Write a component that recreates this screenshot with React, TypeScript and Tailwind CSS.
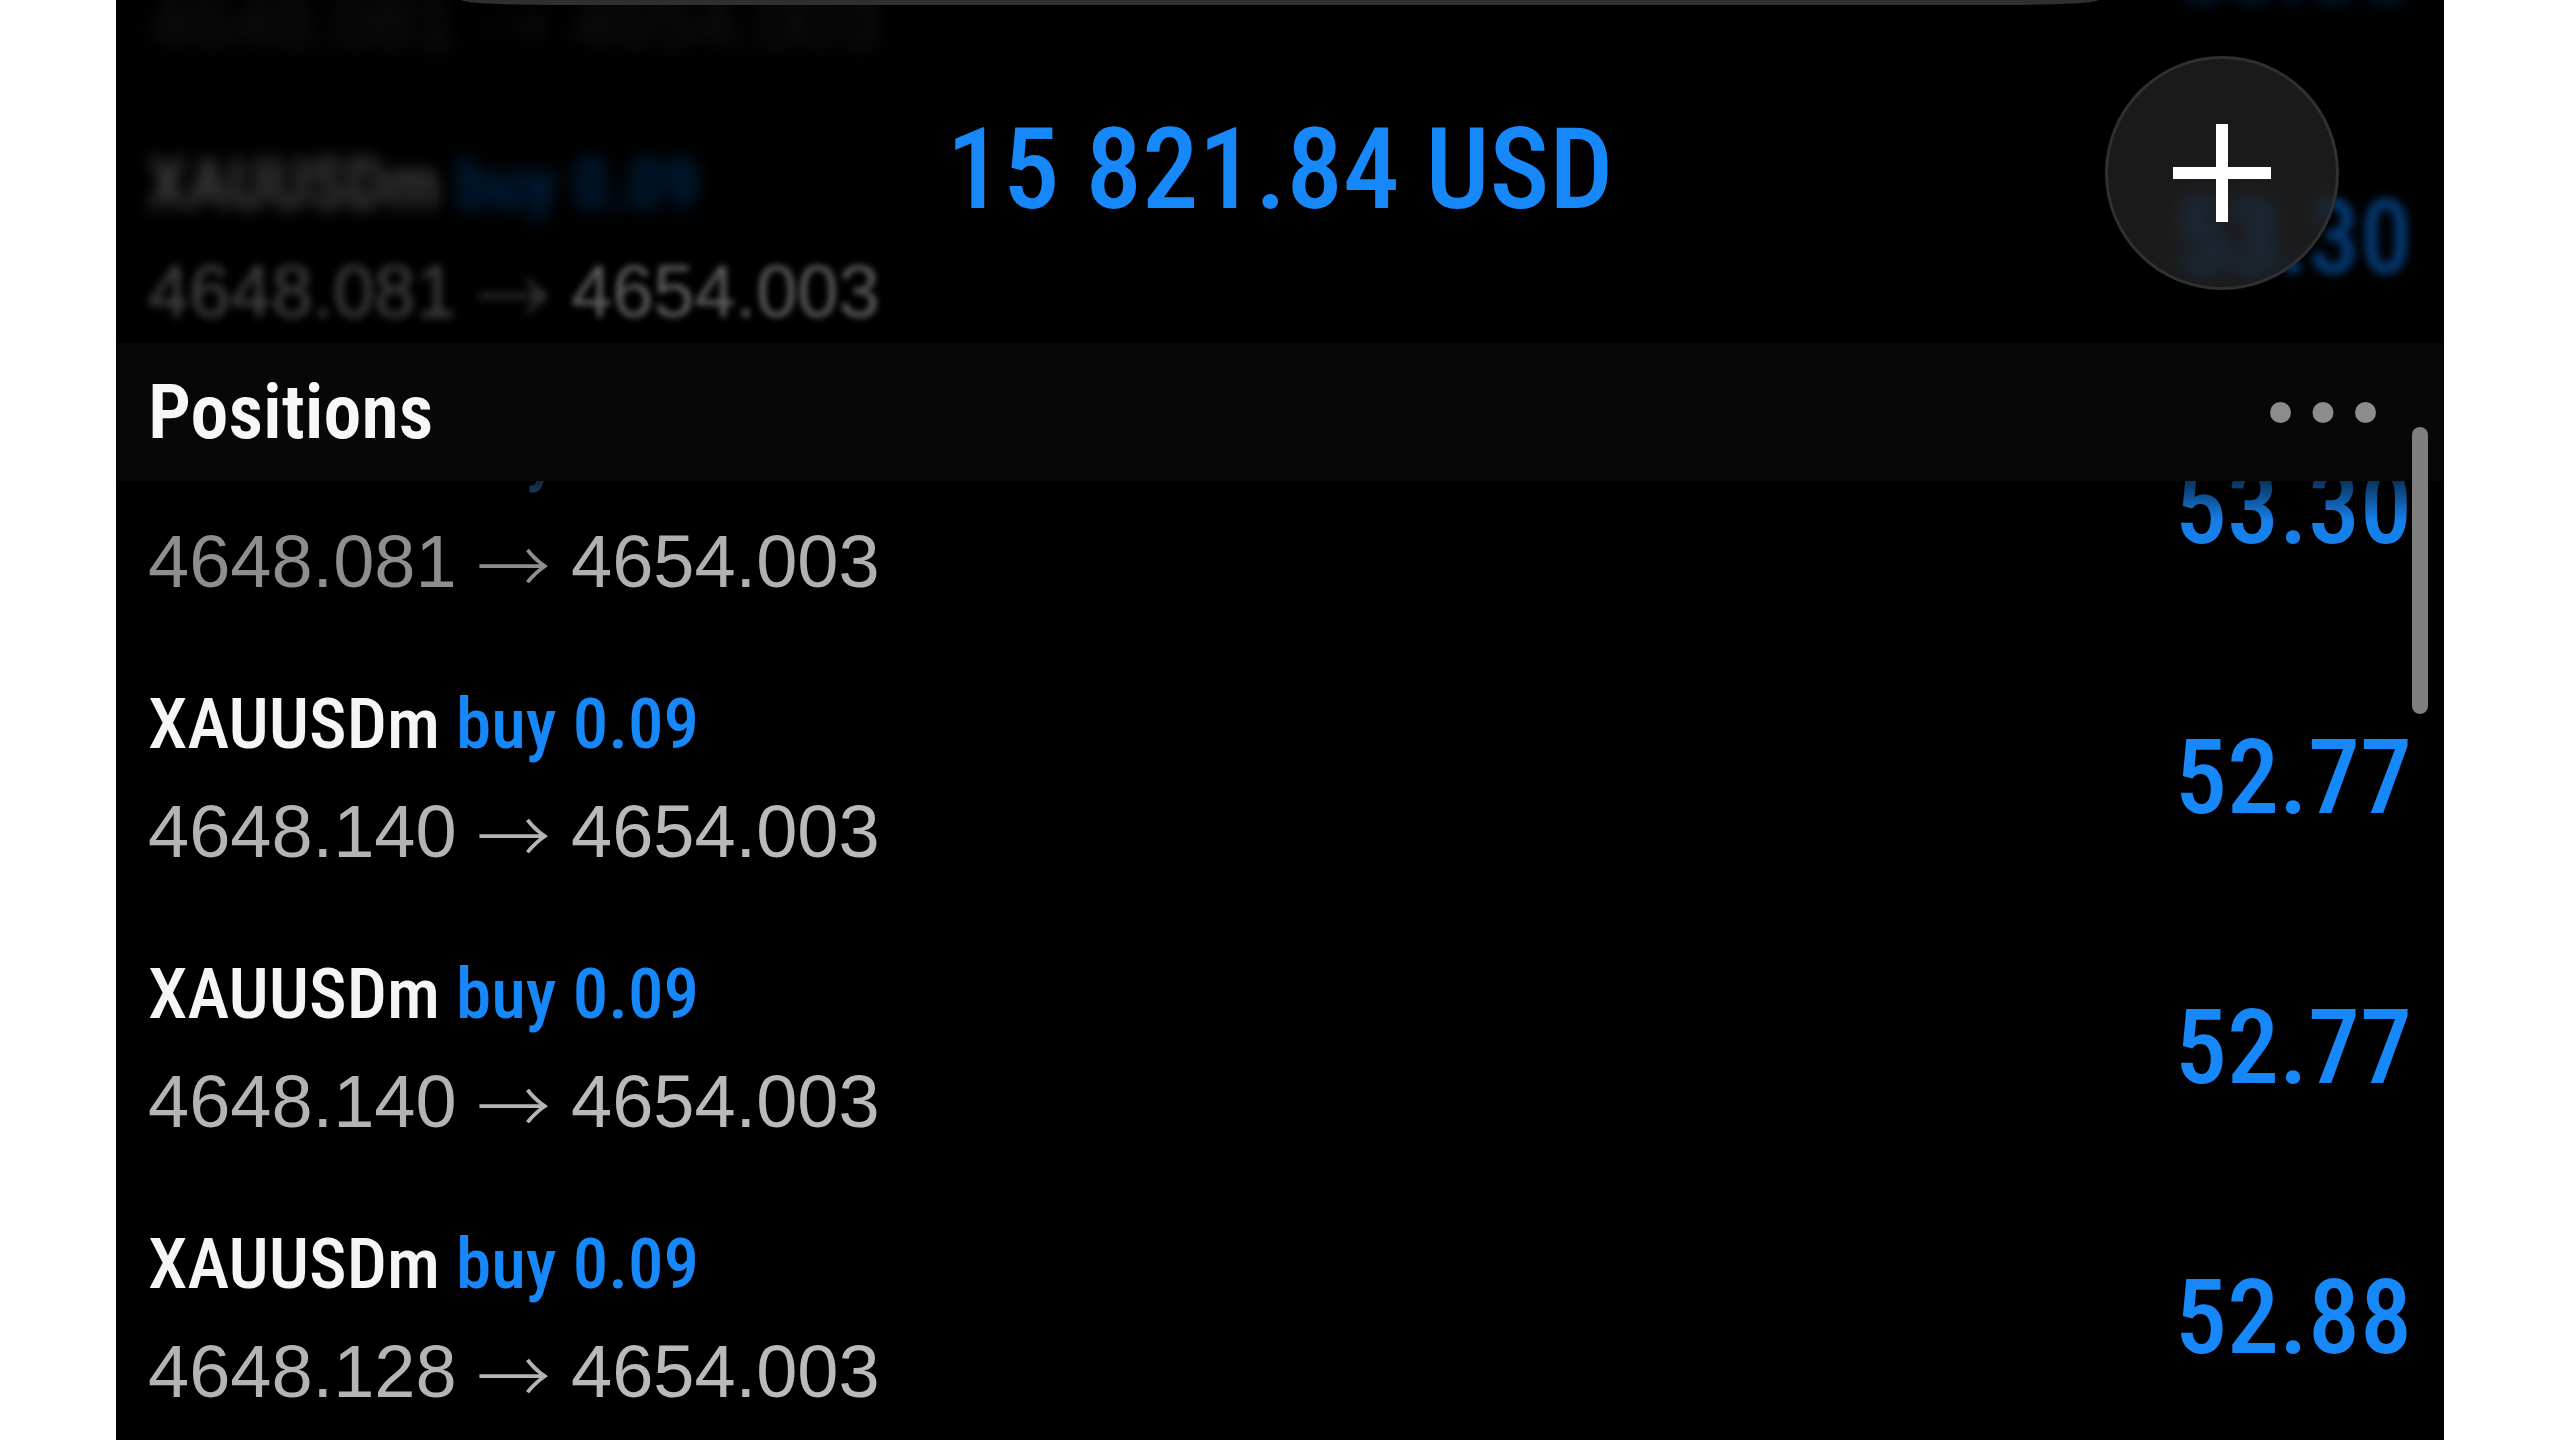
import React from 'react';

type Tone = {
  symbol: string;
  side: string;
  open: string;
  current: string;
  profit: string;
};

type Position = {
  id: number;
  open: string;
  current: string;
  profit: string;
  tone: Tone;
};

const normal: Tone = {
  symbol: 'text-[#f5f5f5]',
  side: 'text-[#1688fa]',
  open: 'text-[#b4b4b4]',
  current: 'text-[#bababa]',
  profit: 'text-[#1688fa]',
};

const leaving: Tone = {
  symbol: 'text-[#505050]',
  side: 'text-[#2a62a0]',
  open: 'text-[#8e8e8e]',
  current: 'text-[#b0b0b0]',
  profit: 'text-[#1680ea]',
};

const faded: Tone = {
  symbol: 'text-[#464646] blur-[8px]',
  side: 'text-[#00294f] blur-[9px]',
  open: 'text-[#444444] blur-[4px]',
  current: 'text-[#5c5c5c] blur-[3px]',
  profit: 'text-[#053c78] blur-[5px]',
};

const gone: Tone = {
  symbol: 'text-black',
  side: 'text-black',
  open: 'text-[#161616] blur-[10px]',
  current: 'text-[#161616] blur-[10px]',
  profit: 'text-[#021c38] blur-[8px]',
};

const positions: Position[] = [
  { id: 1, open: '4648.081', current: '4654.003', profit: '53.30', tone: gone },
  { id: 2, open: '4648.081', current: '4654.003', profit: '53.30', tone: faded },
  { id: 3, open: '4648.081', current: '4654.003', profit: '53.30', tone: leaving },
  { id: 4, open: '4648.140', current: '4654.003', profit: '52.77', tone: normal },
  { id: 5, open: '4648.140', current: '4654.003', profit: '52.77', tone: normal },
  { id: 6, open: '4648.128', current: '4654.003', profit: '52.88', tone: normal },
];

const PositionRow = ({ position }: { position: Position }) => {
  const { tone } = position;
  return (
    <li className="flex h-[270px] items-center justify-between px-8">
      <div>
        <div className="flex gap-4 text-[71px] leading-[108px] font-medium">
          <span className={tone.symbol}>XAUUSDm</span>
          <span className={tone.side}>buy 0.09</span>
        </div>
        <div className="flex font-['Liberation_Sans',Arial,sans-serif] text-[74px] leading-[108px]">
          <span className={`w-[308px] ${tone.open}`}>{position.open}</span>
          <span className={`w-[115px] text-center font-['Noto_Sans_CJK_JP',sans-serif] font-light ${tone.open}`}>→</span>
          <span className={tone.current}>{position.current}</span>
        </div>
      </div>
      <span className={`text-[104px] leading-none font-medium ${tone.profit}`}>{position.profit}</span>
    </li>
  );
};

const App = () => {
  return (
    <div className="h-screen bg-white px-[116px]">
      <main className="relative h-full overflow-hidden bg-black font-['Roboto_Condensed','Open_Sans_Condensed',Roboto,sans-serif] whitespace-nowrap">
        <ul className="-mt-[167px]">
          {positions.map((position) => (
            <PositionRow key={position.id} position={position} />
          ))}
        </ul>

        <header className="absolute inset-x-0 top-0">
          <div className="mx-[346px] h-[5px] rounded-b-[90px_5px] bg-[#2f2f2f]" />
          <div className="grid h-[338px] grid-cols-[1fr_auto_1fr] items-start px-[105px] pt-[51px]">
            <h1 className="col-start-2 text-[113px] leading-[228px] font-medium text-[#1688fa]">15 821.84 USD</h1>
            <button
              aria-label="New order"
              className="flex size-[234px] items-center justify-center justify-self-end rounded-full border-3 border-[#303030] bg-[#2c2c2c]/60 backdrop-blur-[10px]"
            >
              <svg className="size-[98px]" viewBox="0 0 98 98" fill="none" stroke="#fff" strokeWidth="12">
                <path d="M49 0v98M0 49h98" />
              </svg>
            </button>
          </div>
          <div className="flex h-[138px] items-center justify-between bg-[#070707] pr-[68px] pl-8">
            <h2 className="text-[76px] leading-none font-semibold text-[#f7f7f7]">Positions</h2>
            <button aria-label="More">
              <svg className="h-[21px] w-[106px]" viewBox="0 0 106 21" fill="#8c8c8c">
                <circle cx="10.5" cy="10.5" r="10.5" />
                <circle cx="53" cy="10.5" r="10.5" />
                <circle cx="95.5" cy="10.5" r="10.5" />
              </svg>
            </button>
          </div>
          <div className="h-10 bg-linear-to-b from-black/60 to-transparent" />
        </header>

        <div className="absolute top-[427px] right-4 h-[287px] w-4 rounded-full bg-[#7f7f7f]" />
      </main>
    </div>
  );
};

export default App;
